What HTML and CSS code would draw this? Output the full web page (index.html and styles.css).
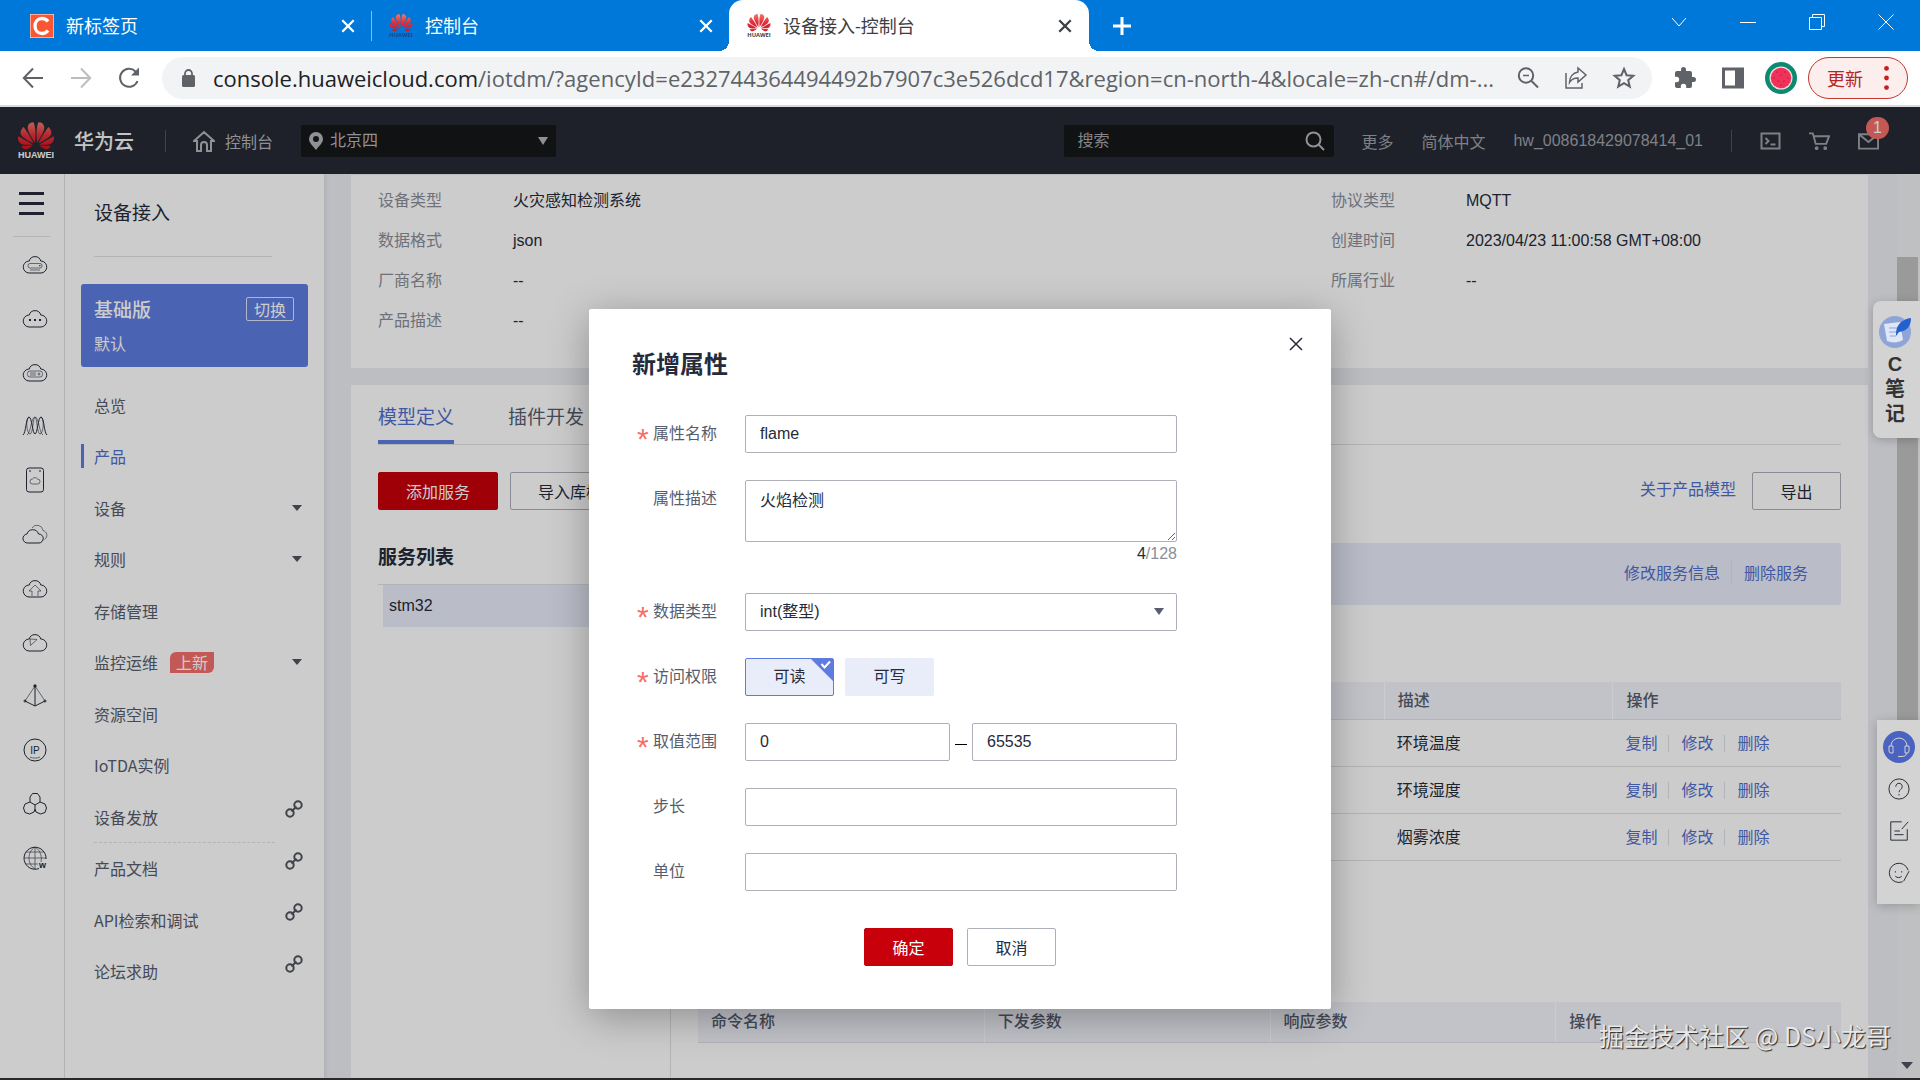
FILE: index.html
```html
<!DOCTYPE html>
<html lang="zh-CN">
<head>
    <meta charset="UTF-8">
    <meta name="viewport" content="width=device-width, initial-scale=1.0">
    <title>设备接入-控制台</title>
    <link rel="stylesheet" href="styles.css">
</head>
<body>
    <svg class="sprite" aria-hidden="true">
        <defs>
            <linearGradient id="petal" x1="0" y1="0" x2="0" y2="1">
                <stop offset="0" stop-color="#f0796a"/>
                <stop offset="0.5" stop-color="#e0303a"/>
                <stop offset="1" stop-color="#d4141e"/>
            </linearGradient>
            <symbol id="huawei" viewBox="0 0 24 25">
                <path fill="url(#petal)" transform="translate(0 -3)" d="M3.67 6.14S1.82 7.91 1.72 9.78v.35c.08 1.51 1.22 2.4 1.22 2.4 1.83 1.79 6.26 4.04 7.3 4.55 0 0 .06.03.1-.01l.02-.04v-.04C7.52 10.8 3.67 6.14 3.67 6.14zM9.65 18.6c-.02-.08-.1-.08-.1-.08l-7.38.26c.8 1.43 2.15 2.53 3.56 2.2.96-.25 3.16-1.78 3.88-2.3.06-.05.04-.09.04-.09zm.08-.78C6.49 15.63.21 12.28.21 12.28c-.15.46-.2.9-.21 1.3v.07c0 1.07.4 1.82.4 1.82.8 1.69 2.34 2.2 2.34 2.2.7.3 1.4.31 1.4.31.12.02 4.4 0 5.54 0 .05 0 .08-.05.08-.05v-.06c0-.03-.03-.05-.03-.05zM9.06 3.19a3.42 3.42 0 0 0-2.57 3.15v.41c.03.6.16 1.05.16 1.05.66 2.9 3.86 7.65 4.55 8.65.05.05.1.03.1.03a.1.1 0 0 0 .06-.1c1.06-10.6-1.11-13.42-1.11-13.42-.32.02-1.19.23-1.19.23zm8.3 2.27s-.49-1.8-2.44-2.28c0 0-.57-.14-1.17-.22 0 0-2.18 2.81-1.12 13.43.01.07.06.08.06.08.07.03.1-.03.1-.03.72-1.03 3.9-5.76 4.55-8.64 0 0 .36-1.4.02-2.34zm-2.92 13.07s-.07 0-.09.05c0 0-.01.07.03.1.7.51 2.85 2 3.88 2.3 0 0 .16.05.43.06h.14c.69-.02 1.9-.37 3-2.26l-7.4-.25zm7.83-8.41c.14-2.06-1.94-3.97-1.94-3.98 0 0-3.85 4.66-6.67 10.8 0 0-.03.08.02.13l.04.01h.06c1.06-.53 5.46-2.77 7.28-4.54 0 0 1.15-.93 1.21-2.42zm1.52 2.14s-6.28 3.37-9.52 5.55c0 0-.05.04-.03.11 0 0 .03.06.07.06 1.16 0 5.56 0 5.67-.02 0 0 .57-.02 1.27-.29 0 0 1.56-.5 2.37-2.27 0 0 .73-1.45.17-3.14z"/>
                <text x="12" y="24" text-anchor="middle" font-size="6" font-weight="bold" fill="currentColor">HUAWEI</text>
            </symbol>
            <symbol id="x" viewBox="0 0 14 14"><path d="M2 2l10 10M12 2L2 12"/></symbol>
            <symbol id="cloud" viewBox="0 0 26 20"><path d="M7 19a6 6 0 0 1-.8-11.900h1A6 6 0 0 1 18.800 7.100h1A6 6 0 0 1 19 19z"/></symbol>
            <symbol id="link" viewBox="0 0 18 18"><circle cx="5" cy="13" r="3.700"/><circle cx="13" cy="5" r="3.700"/><path d="M6.500 11.500l5-5"/></symbol>
        </defs>
    </svg>

    <!-- browser tabs -->
    <div class="tabs">
        <div class="tab first">
            <svg class="favicon" viewBox="0 0 24 24"><rect width="24" height="24" fill="#fc5531"/><path d="M18 7.500C16.500 5.500 14.500 4.500 12 4.500c-4.500 0-7 3.500-7 7.500s2.500 7.500 7 7.500c2.500 0 4.500-1 6-3" fill="none" stroke="#fff" stroke-width="3.400"/></svg>
            <span>新标签页</span>
            <button class="tab-close" aria-label="关闭"><svg viewBox="0 0 14 14"><use href="#x"/></svg></button>
        </div>
        <div class="tab second">
            <svg class="favicon"><use href="#huawei"/></svg>
            <span>控制台</span>
            <button class="tab-close" aria-label="关闭"><svg viewBox="0 0 14 14"><use href="#x"/></svg></button>
        </div>
        <div class="tab active">
            <svg class="favicon"><use href="#huawei"/></svg>
            <span>设备接入-控制台</span>
            <button class="tab-close" aria-label="关闭"><svg viewBox="0 0 14 14"><use href="#x"/></svg></button>
        </div>
        <button class="new-tab" aria-label="新标签页"><svg viewBox="0 0 18 18"><path d="M9 0v18M0 9h18"/></svg></button>
        <div class="window-buttons">
            <button aria-label="标签列表"><svg viewBox="0 0 16 16"><path d="M1 4l7 8 7-8"/></svg></button>
            <button aria-label="最小化"><svg viewBox="0 0 16 16"><path d="M0 8.500h16"/></svg></button>
            <button aria-label="还原"><svg viewBox="0 0 16 16"><path d="M.5 3.500h12v12H.5zM3.500 3.500v-3h12v12h-3"/></svg></button>
            <button aria-label="关闭"><svg viewBox="0 0 16 16"><path d="M.5.5l15 15M15.500.5l-15 15"/></svg></button>
        </div>
    </div>

    <!-- address bar -->
    <div class="toolbar">
        <button class="tool" aria-label="后退"><svg viewBox="0 0 24 24"><path d="M22 12H3M12 2.500L2.800 12l9.200 9.500"/></svg></button>
        <button class="tool disabled" aria-label="前进"><svg viewBox="0 0 24 24"><path d="M2 12h19M12 2.500l9.200 9.500-9.200 9.500"/></svg></button>
        <button class="tool" aria-label="刷新"><svg viewBox="0 0 24 24"><path d="M20.500 15A9 9 0 1 1 18.500 5.500l2 2.500"/><path d="M22 1.500V9.500h-8z" fill="#5f6368" stroke="none"/></svg></button>
        <div class="omnibox">
            <svg class="lock" viewBox="0 0 13 18"><rect y="6" width="13" height="12" rx="1.500" fill="#5f6368"/><path d="M3 7V4.500a3.500 3.500 0 0 1 7 0V7" fill="none" stroke="#5f6368" stroke-width="1.800"/></svg>
            <div class="url"><b>console.huaweicloud.com</b>/iotdm/?agencyId=e232744364494492b7907c3e526dcd17&amp;region=cn-north-4&amp;locale=zh-cn#/dm-...</div>
            <button class="tool" aria-label="缩放"><svg viewBox="0 0 24 24"><circle cx="10" cy="9.500" r="7.200"/><path d="M15.500 15l6.500 6.500"/><path d="M7 9.500h6" stroke-width="1.500"/></svg></button>
            <button class="tool" aria-label="分享"><svg class="thin" viewBox="0 0 24 24"><path d="M2 7v15h16v-5M14 2l8 7-8 7v-4c-4 0-6.500 1-8.500 4.500C5.500 11 9 7 14 6z"/></svg></button>
            <button class="tool" aria-label="收藏"><svg viewBox="0 0 24 24"><path d="M12 3l2.600 6.200 6.700.600-5.100 4.400 1.600 6.500-5.800-3.500-5.800 3.500 1.600-6.500-5.100-4.400 6.700-.6z"/></svg></button>
        </div>
        <button class="tool" aria-label="扩展程序"><svg viewBox="0 0 24 24"><path stroke="none" fill="#5f6368" d="M20.500 11H19V7a2 2 0 0 0-2-2h-4V3.500a2.500 2.500 0 0 0-5 0V5H4a2 2 0 0 0-2 2v3.800h1.500a2.700 2.700 0 0 1 0 5.400H2V20a2 2 0 0 0 2 2h3.800v-1.500a2.700 2.700 0 0 1 5.400 0V22H17a2 2 0 0 0 2-2v-4h1.500a2.500 2.500 0 0 0 0-5z"/></svg></button>
        <button class="tool" aria-label="侧边栏"><svg viewBox="0 0 24 24"><path d="M2.500 3h19v18h-19z" stroke-width="3"/><path d="M14 2h8v20h-8z" fill="#5f6368" stroke="none"/></svg></button>
        <button class="tool" aria-label="用户"><svg class="avatar" viewBox="0 0 32 32"><circle cx="16" cy="16" r="16" fill="#0b8a71"/><circle cx="16" cy="16" r="11.500" fill="#fbe0dc"/><circle cx="16" cy="16" r="10.300" fill="#f0325a"/><g fill="#7d1230"><circle cx="12" cy="10" r=".6"/><circle cx="20" cy="10" r=".6"/><circle cx="16" cy="13" r=".6"/><circle cx="9" cy="16" r=".6"/><circle cx="23" cy="16" r=".6"/><circle cx="13" cy="19" r=".6"/><circle cx="19" cy="19" r=".6"/><circle cx="16" cy="23" r=".6"/></g></svg></button>
        <button class="update">更新<svg viewBox="0 0 4 20"><circle cx="2" cy="2" r="2"/><circle cx="2" cy="10" r="2"/><circle cx="2" cy="18" r="2"/></svg></button>
    </div>

    <div class="page">
        <header>
            <svg class="logo"><use href="#huawei"/></svg>
            <h1>华为云</h1>
            <span class="divider"></span>
            <a class="home" href="#"><svg viewBox="0 0 22 22"><path d="M1 11L11 2l10 9h-3v10h-4v-6a3 3 0 0 0-6 0v6H4V11z"/></svg>控制台</a>
            <div class="region">
                <svg viewBox="0 0 14 18"><path fill-rule="evenodd" d="M7 0a7 7 0 0 1 7 7c0 4-4.500 7.500-7 11C4.500 14.500 0 11 0 7a7 7 0 0 1 7-7zm0 4a3 3 0 1 0 0 6 3 3 0 0 0 0-6z"/></svg>
                <select aria-label="区域"><option>北京四</option></select>
            </div>
            <div class="search">
                <input type="text" placeholder="搜索" aria-label="搜索">
                <svg viewBox="0 0 20 20"><circle cx="8.500" cy="8.500" r="7"/><path d="M13.500 13.500l5.500 5.500"/></svg>
            </div>
            <nav>
                <a href="#">更多</a>
                <a href="#">简体中文</a>
                <a href="#">hw_008618429078414_01</a>
                <span class="divider"></span>
                <a href="#" aria-label="CloudShell"><svg viewBox="0 0 20 20"><path d="M1 2.500h18v15H1zM5 7l3 3-3 3M10 13.500h5"/></svg></a>
                <a href="#" aria-label="购物车"><svg viewBox="0 0 22 20"><path d="M0 2h4l3 11h11l3-8H5"/><circle cx="8" cy="17.500" r="1"/><circle cx="17" cy="17.500" r="1"/></svg></a>
                <a class="mail" href="#" aria-label="消息"><svg viewBox="0 0 22 20"><path d="M1 3h20v15H1zM1 3l10 8 10-8"/></svg><span class="badge">1</span></a>
            </nav>
        </header>

        <div class="body">
            <!-- service rail -->
            <div class="rail">
                <button class="menu" aria-label="服务列表"><span></span><span></span><span></span></button>
                <div class="rail-icons">
                    <svg viewBox="0 0 26 20"><use href="#cloud"/><rect x="6" y="9.500" width="14" height="4.500" rx="2" class="fine"/><path d="M17 11.700h1.500"/><path class="fine" d="M8 16h10"/></svg>
                    <svg viewBox="0 0 26 20"><use href="#cloud"/><path stroke-width="2" d="M7 12h2M12 12h2M17 12h2"/></svg>
                    <svg viewBox="0 0 26 20"><use href="#cloud"/><rect x="5.500" y="9" width="15" height="6" rx="2.500" class="fine"/><path class="fine" d="M8 11h6M8 13h6"/><circle cx="17" cy="12" r="1" class="fine"/></svg>
                    <svg viewBox="0 0 26 20"><path d="M1 19C4 17 4 1 7 1s3.500 17 6 17 3-17 6-17 3 16 6 18"/><path class="fine" d="M5 19C9 17 9 1 13 1s4 16 8 18M7 1C3 4 5 18 8 18s3-17 5-17M19 1c4 3 2 17-1 17S15 1 13 1"/></svg>
                    <svg viewBox="0 0 26 26"><rect x="4.500" y="1" width="17" height="24" rx="2.500"/><path d="M7 4h2M17 4h2"/><path class="fine" d="M10.500 17a2.500 2.500 0 0 1 0-5 3 3 0 0 1 5 0 2.500 2.500 0 0 1 0 5z"/></svg>
                    <svg viewBox="0 0 26 20"><path d="M6 19a4.500 4.500 0 0 1-1-9 6 6 0 0 1 11.500 0A4.500 4.500 0 0 1 17 19z"/><path class="fine" d="M10 4a6 6 0 0 1 11 2.500c4 1 5.500 6 1.500 9"/></svg>
                    <svg viewBox="0 0 26 20"><use href="#cloud"/><path class="fine" d="M10 18v-5H7l6-6 6 6h-3v5"/></svg>
                    <svg viewBox="0 0 26 20"><use href="#cloud"/><path class="fine" d="M8 7l7 .500-6.500 6z"/></svg>
                    <svg viewBox="0 0 26 24"><path class="fine" d="M13 2L3 17M13 2l10 15"/><path d="M3 17l10 5 10-5M13 2v20"/><circle cx="13" cy="2" r="1.200" fill="currentColor"/><circle cx="3" cy="17" r="1"/><circle cx="23" cy="17" r="1"/></svg>
                    <svg viewBox="0 0 26 24"><circle cx="13" cy="12" r="11"/><text x="13" y="15.500" text-anchor="middle" font-size="10" fill="currentColor" stroke="none">IP</text><path class="fine" d="M8 19c3 1.500 7 1.500 10 0"/></svg>
                    <svg viewBox="0 0 26 24"><path d="M8 10V5l2.500-3.500h5L18 5v5M13 13l-5-3-5 2-1.500 4L3 20.500l4.500 1.500 4.500-2 1-3zM13 13l5-3 5 2 1.500 4-1.500 4.500-4.500 1.500-4.500-2-1-3"/></svg>
                    <svg viewBox="0 0 26 24"><path d="M17 22.500A11 11 0 1 1 24 13"/><path class="fine" d="M13 1v22M2 12h22M4 6h18M4 18h12M13 1C5 6 5 18 13 23M13 1c6 4 7 10 6 15"/><text x="17" y="22" font-size="9" font-weight="bold" fill="currentColor" stroke="none">w</text></svg>
                </div>
            </div>

            <aside class="sidebar">
                <h2>设备接入</h2>
                <div class="plan">
                    <strong>基础版</strong><button>切换</button>
                    <span>默认</span>
                </div>
                <ul class="side-menu">
                    <li><a href="#">总览</a></li>
                    <li class="current"><a href="#">产品</a></li>
                    <li class="more"><a href="#">设备</a></li>
                    <li class="more"><a href="#">规则</a></li>
                    <li><a href="#">存储管理</a></li>
                    <li class="more"><a href="#">监控运维</a><span class="new">上新</span></li>
                    <li><a href="#">资源空间</a></li>
                    <li><a href="#">IoTDA实例</a></li>
                    <li class="dashed"><a href="#">设备发放</a><svg><use href="#link"/></svg></li>
                    <li><a href="#">产品文档</a><svg><use href="#link"/></svg></li>
                    <li><a href="#">API检索和调试</a><svg><use href="#link"/></svg></li>
                    <li><a href="#">论坛求助</a><svg><use href="#link"/></svg></li>
                </ul>
            </aside>

            <main>
                <section class="card">
                    <dl class="info">
                        <dt>设备类型</dt><dd>火灾感知检测系统</dd>
                        <dt>协议类型</dt><dd>MQTT</dd>
                        <dt>数据格式</dt><dd>json</dd>
                        <dt>创建时间</dt><dd>2023/04/23 11:00:58 GMT+08:00</dd>
                        <dt>厂商名称</dt><dd>--</dd>
                        <dt>所属行业</dt><dd>--</dd>
                        <dt>产品描述</dt><dd>--</dd>
                    </dl>
                </section>

                <section class="card model">
                    <div class="model-tabs">
                        <a class="current" href="#">模型定义</a>
                        <a href="#">插件开发</a>
                    </div>
                    <div class="actions">
                        <button class="btn primary">添加服务</button>
                        <button class="btn">导入库模型</button>
                        <a href="#">关于产品模型</a>
                        <button class="btn">导出</button>
                    </div>
                    <div class="services">
                        <div class="service-list">
                            <h3>服务列表</h3>
                            <ul><li>stm32</li></ul>
                        </div>
                        <div class="service">
                            <div class="service-bar ops">
                                <a href="#">修改服务信息</a><a href="#">删除服务</a>
                            </div>
                            <table class="properties">
                                <thead>
                                    <tr><th></th><th></th><th></th><th>描述</th><th>操作</th></tr>
                                </thead>
                                <tbody>
                                    <tr><td></td><td></td><td></td><td>环境温度</td><td class="ops"><a href="#">复制</a><a href="#">修改</a><a href="#">删除</a></td></tr>
                                    <tr><td></td><td></td><td></td><td>环境湿度</td><td class="ops"><a href="#">复制</a><a href="#">修改</a><a href="#">删除</a></td></tr>
                                    <tr><td></td><td></td><td></td><td>烟雾浓度</td><td class="ops"><a href="#">复制</a><a href="#">修改</a><a href="#">删除</a></td></tr>
                                </tbody>
                            </table>
                            <table class="commands">
                                <thead>
                                    <tr><th>命令名称</th><th>下发参数</th><th>响应参数</th><th>操作</th></tr>
                                </thead>
                            </table>
                        </div>
                    </div>
                </section>
            </main>
            <div class="scrollbar"><div class="thumb"></div></div>
        </div>

        <div class="overlay">
            <form class="modal">
                <button type="button" class="close" aria-label="关闭"><svg viewBox="0 0 14 14"><path d="M1 1l12 12M13 1L1 13"/></svg></button>
                <h2>新增属性</h2>
                <div class="row required">
                    <label for="name">属性名称</label>
                    <input id="name" type="text" value="flame">
                </div>
                <div class="row">
                    <label for="desc">属性描述</label>
                    <div class="desc">
                        <textarea id="desc">火焰检测</textarea>
                        <p><b>4</b>/128</p>
                    </div>
                </div>
                <div class="row required">
                    <label for="type">数据类型</label>
                    <div class="select"><select id="type"><option>int(整型)</option></select></div>
                </div>
                <div class="row required">
                    <span class="label">访问权限</span>
                    <div class="access">
                        <input id="read" type="checkbox" checked>
                        <label for="read">可读<svg viewBox="0 0 22 22"><path d="M0 0h22v22z" fill="#5e7ce0"/><path d="M10.500 5l3 3.500L19 2.500" fill="none" stroke="#fff" stroke-width="2"/></svg></label>
                        <input id="write" type="checkbox">
                        <label for="write">可写</label>
                    </div>
                </div>
                <div class="row required">
                    <label for="min">取值范围</label>
                    <div class="range">
                        <input id="min" type="text" value="0"><span></span><input type="text" value="65535" aria-label="最大值">
                    </div>
                </div>
                <div class="row">
                    <label for="step">步长</label>
                    <input id="step" type="text">
                </div>
                <div class="row">
                    <label for="unit">单位</label>
                    <input id="unit" type="text">
                </div>
                <div class="buttons">
                    <button type="button" class="btn primary">确定</button>
                    <button type="button" class="btn">取消</button>
                </div>
            </form>
        </div>

        <!-- floating tools on the right edge -->
        <div class="note">
            <svg viewBox="0 0 34 34"><circle cx="17" cy="17" r="16" fill="#8fa5d8"/><path d="M6 9l16-2 3 18c-5 3-11 3-16 1z" fill="#dfe7f6"/><path d="M11 13h8M11 17h8M12 21h6" stroke="#8fa5d8" stroke-width="1.200"/><path d="M18 19C18 10 24 4 33 3c0 8-4 13-12 14l-3 4z" fill="#2261cf"/></svg>
            <span>C</span><span>笔</span><span>记</span>
        </div>
        <div class="float">
            <a class="service-call" href="#" aria-label="客服"><svg viewBox="0 0 22 22"><path d="M3 10a8 8 0 0 1 16 0M1 10h4v7H3a2 2 0 0 1-2-2zM21 10h-4v7h2a2 2 0 0 0 2-2zM19 17c-1 3-3 3.500-6 3.500M10 20.500h4"/></svg></a>
            <a href="#" aria-label="帮助"><svg viewBox="0 0 24 24"><circle cx="12" cy="12" r="11"/><path d="M8.500 9.500c0-5 7-5 7 0 0 3-3.500 3-3.500 6M12 17.500v1.500"/></svg></a>
            <a href="#" aria-label="建议"><svg viewBox="0 0 24 24"><path d="M15 2H3v20h18V10M22 2l-7 8M7 12h6M7 16h10"/></svg></a>
            <a href="#" aria-label="评价"><svg viewBox="0 0 24 24"><path d="M16 21.500A10.500 10.500 0 1 1 22 9M23 10l-6 11M8 10v1.500M15 10v1.500M8 15.500c2 2 5 2 7 0"/></svg></a>
        </div>
        <div class="watermark">掘金技术社区 @ DS小龙哥</div>
    </div>
</body>
</html>
```
FILE: styles.css
```css
* {
    box-sizing: border-box;
}

body {
    margin: 0;
    height: 100vh;
    display: flex;
    flex-direction: column;
    overflow: hidden;
    font-family: "Liberation Sans", "Noto Sans CJK SC", sans-serif;
    font-size: 16px;
    color: #252b3a;
    border-bottom: 2px solid #2a282b;
}

h1, h2, h3, p, ul, dl, dd {
    margin: 0;
    padding: 0;
}

ul {
    list-style: none;
}

a {
    color: #526ecc;
    text-decoration: none;
}

button, input, select, textarea {
    font: inherit;
    color: inherit;
}

button {
    background: none;
    border: none;
    padding: 0;
}

svg {
    display: block;
    fill: none;
    stroke: currentColor;
}

.sprite {
    position: absolute;
    width: 0;
    height: 0;
}

#huawei * {
    stroke: none;
}

/* browser tabs */
.tabs {
    display: flex;
    height: 51px;
    background: #0078d9;
    color: #fff;
    font-size: 18px;
    font-family: "Open Sans", "Noto Sans CJK SC", sans-serif;
}

.tab {
    display: flex;
    align-items: center;
    gap: 12px;
    width: 360px;
    padding: 0 16px 0 18px;
}

.tab.first {
    width: 371px;
    padding: 0 15px 0 30px;
}

.tab.second {
    width: 358px;
    padding-right: 15px;
    color: #20438c;
    background: linear-gradient(#7fc0f2, #7fc0f2) 0 50% / 1px 30px no-repeat;
}

.tab.second span, .tab.second .tab-close {
    color: #fff;
}

.tab.active {
    position: relative;
    background: #fff;
    color: #3c4043;
    border-radius: 14px 14px 0 0;
}

.tab.active::before, .tab.active::after {
    content: "";
    position: absolute;
    bottom: 0;
    width: 10px;
    height: 10px;
}

.tab.active::before {
    left: -10px;
    background: radial-gradient(circle at 0 0, transparent 10px, #fff 10px);
}

.tab.active::after {
    right: -10px;
    background: radial-gradient(circle at 100% 0, transparent 10px, #fff 10px);
}

.tab span {
    padding-bottom: 2px;
}

.favicon {
    width: 24px;
    height: 24px;
}

.tab-close {
    margin-left: auto;
}

.tab-close svg {
    width: 16px;
    height: 16px;
    stroke-width: 2;
}

.new-tab {
    width: 66px;
}

.new-tab svg {
    width: 18px;
    height: 18px;
    margin: 0 auto;
    stroke-width: 3;
}

.window-buttons {
    display: flex;
    height: 44px;
    margin-left: auto;
}

.window-buttons button {
    width: 69px;
}

.window-buttons svg {
    width: 16px;
    height: 16px;
    margin: 0 auto;
}

/* address bar */
.toolbar {
    display: flex;
    align-items: center;
    height: 56px;
    padding: 0 12px 0 9px;
    border-bottom: 2px solid #dadada;
    background: #fff;
    color: #5f6368;
    font-family: "Open Sans", "Noto Sans CJK SC", sans-serif;
}

.tool {
    flex: none;
    width: 48px;
}

.tool svg {
    width: 24px;
    height: 24px;
    margin: 0 auto;
    stroke-width: 2;
}

.tool svg.thin {
    stroke-width: 1.5;
}

.tool svg.avatar {
    width: 32px;
    height: 32px;
    stroke: none;
}

.tool.disabled {
    color: #bbbdbf;
}

.omnibox {
    flex: 1;
    min-width: 0;
    display: flex;
    align-items: center;
    height: 42px;
    margin: 0 9px;
    padding: 0 4px 0 20px;
    border-radius: 21px;
    background: #f1f3f4;
}

.lock {
    width: 13px;
    height: 18px;
    margin-right: 18px;
    stroke: none;
}

.url {
    flex: 1;
    min-width: 0;
    overflow: hidden;
    white-space: nowrap;
    font-size: 22px;
}

.url b {
    font-weight: normal;
    color: #202124;
}

.update {
    display: flex;
    align-items: center;
    justify-content: space-between;
    width: 100px;
    height: 42px;
    margin-left: 3px;
    padding: 0 18px;
    border: 1px solid #c5352c;
    border-radius: 21px;
    background: #fceeed;
    color: #b3261e;
    font-size: 18px;
}

.update svg {
    width: 5px;
    height: 24px;
    fill: #c5221f;
    stroke: none;
}

/* console header */
.page {
    position: relative;
    flex: 1;
    min-height: 0;
    display: flex;
    flex-direction: column;
}

header {
    display: flex;
    align-items: center;
    height: 67px;
    padding: 0 41px 0 18px;
    background: #262a34;
    color: #b4b6bb;
}

.logo {
    width: 36px;
    height: 38px;
    color: #fff;
}

h1 {
    margin-left: 20px;
    font-size: 20px;
    font-weight: 500;
    color: #f5f5f6;
}

.divider {
    width: 1px;
    height: 22px;
    background: #50545e;
}

h1 + .divider {
    margin: 0 27px 0 31px;
}

.home {
    display: flex;
    align-items: center;
    gap: 10px;
    color: inherit;
}

.home svg {
    width: 22px;
    height: 22px;
    stroke-width: 2;
}

.region, .search {
    display: flex;
    align-items: center;
    height: 32px;
    border-radius: 2px;
    background: #16171a;
}

.region {
    position: relative;
    width: 255px;
    margin-left: 28px;
    padding-left: 8px;
}

.region svg {
    width: 14px;
    height: 18px;
    fill: #b4b6bb;
    stroke: none;
}

.region select {
    flex: 1;
    padding: 0 7px;
    border: none;
    appearance: none;
    background: none;
}

.region::after {
    content: "";
    position: absolute;
    right: 8px;
    border: 5px solid transparent;
    border-top: 8px solid #b4b6bb;
    border-bottom: none;
}

.search {
    width: 270px;
    margin-left: auto;
    padding: 0 9px 0 13px;
}

.search input {
    flex: 1;
    min-width: 0;
    padding: 0;
    border: none;
    background: none;
}

.search input::placeholder {
    color: #a4a6ac;
}

.search svg {
    width: 20px;
    height: 20px;
    stroke-width: 2;
}

nav {
    display: flex;
    align-items: center;
    gap: 28px;
    margin-left: 27px;
}

nav a {
    color: #9ea1a8;
}

nav svg {
    width: 21px;
    height: 20px;
    stroke-width: 2;
}

.mail {
    position: relative;
}

.badge {
    position: absolute;
    top: -14px;
    left: 8px;
    width: 23px;
    height: 22px;
    border-radius: 11px;
    background: #f66f6a;
    color: #fff;
    line-height: 22px;
    text-align: center;
}

/* rail and sidebar */
.body {
    position: relative;
    flex: 1;
    min-height: 0;
    display: flex;
    background: #ebeef3;
}

.rail {
    width: 65px;
    background: #fff;
    border-right: 1px solid #dfe1e6;
}

.menu {
    display: flex;
    flex-direction: column;
    gap: 7px;
    width: 37px;
    height: 63px;
    margin-left: 13px;
    padding: 18px 6px 0;
    border-bottom: 1px solid #dfe1e6;
}

.menu span {
    width: 25px;
    height: 3px;
    background: #252b3a;
}

.rail-icons {
    display: flex;
    flex-direction: column;
    padding-left: 6px;
}

.rail-icons svg {
    width: 26px;
    height: 54px;
    margin: 0 auto;
}

.fine {
    stroke-width: 0.6;
}

.sidebar {
    width: 259px;
    padding: 0 16px;
    background: #fff;
    box-shadow: 2px 0 4px rgba(0, 0, 0, 0.08);
    font-family: "Noto Sans CJK SC", sans-serif;
}

.sidebar h2 {
    height: 83px;
    margin: 0 36px 27px 13px;
    padding-top: 24px;
    border-bottom: 1px solid #dfe1e6;
    font-size: 19px;
    line-height: 28px;
    font-weight: normal;
}

.plan {
    display: grid;
    grid-template-columns: 1fr 48px;
    grid-template-rows: 28px 32px;
    align-items: center;
    height: 83px;
    padding: 11px 14px 11px 13px;
    border-radius: 3px;
    background: #5e7ce0;
    color: #fff;
}

.plan strong {
    font-size: 19px;
    line-height: 28px;
    font-weight: 500;
}

.plan span {
    align-self: end;
    line-height: 24px;
}

.plan button {
    height: 24px;
    border: 1px solid #dfe5f9;
    border-radius: 2px;
    line-height: 20px;
}

.side-menu {
    display: grid;
    grid-template-rows: repeat(12, 1fr);
    height: 618px;
    margin-top: 12px;
}

.side-menu li {
    position: relative;
    display: flex;
    align-items: center;
    padding: 0 6px 0 13px;
}

.side-menu a {
    color: #575d6c;
}

.side-menu .current {
    background: linear-gradient(#5e7ce0, #5e7ce0) 0 50% / 3px 24px no-repeat;
}

.side-menu .current a {
    color: #526ecc;
}

.more::after {
    content: "";
    margin-left: auto;
    border: 5px solid transparent;
    border-top: 6px solid #50545e;
    border-bottom: none;
}

.new {
    margin-left: 12px;
    padding: 0 6px;
    border-radius: 6px 0;
    background: #f66f6a;
    color: #fff;
    line-height: 21px;
}

.dashed::before {
    content: "";
    position: absolute;
    left: 13px;
    right: 33px;
    bottom: 0;
    border-bottom: 1px dashed #dfe1e6;
}

.side-menu svg {
    width: 18px;
    height: 18px;
    margin: 0 -1px 15px auto;
    stroke-width: 2;
    color: #50545e;
}

/* content */
main {
    flex: 1;
    min-width: 0;
    display: flex;
    flex-direction: column;
    gap: 17px;
    padding: 1px 29px 0 27px;
}

.card {
    flex: none;
    padding: 6px 27px 27px;
    background: #fff;
}

.info {
    display: grid;
    grid-template-columns: 135px 1fr 135px 375px;
    line-height: 40px;
}

.info dt {
    color: #8a8e99;
}

.card.model {
    flex: 1;
    min-height: 0;
    display: flex;
    flex-direction: column;
    overflow: hidden;
    padding: 0 27px;
}

.model-tabs {
    display: flex;
    gap: 54px;
    height: 60px;
    border-bottom: 1px solid #dfe1e6;
    font-size: 19px;
    line-height: 28px;
}

.model-tabs a {
    height: 59px;
    padding-top: 19px;
    color: #575d6c;
}

.model-tabs .current {
    color: #526ecc;
    border-bottom: 4px solid #5e7ce0;
}

.actions {
    display: flex;
    align-items: center;
    gap: 12px;
    margin-top: 27px;
}

.actions a {
    margin-left: auto;
    margin-right: 4px;
    line-height: 36px;
    padding-bottom: 2px;
}

.btn {
    min-width: 89px;
    height: 38px;
    padding: 0 27px 1px;
    border: 1px solid #adb0b8;
    border-radius: 2px;
}

.btn.primary {
    border-color: #c7000b;
    background: #c7000b;
    color: #fff;
}

.services {
    flex: 1;
    display: flex;
    gap: 27px;
}

.service-list {
    width: 293px;
    padding-top: 34px;
    border-right: 1px solid #dfe1e6;
}

h3 {
    font-size: 19px;
    line-height: 28px;
}

.service-list ul {
    margin-top: 12px;
    padding-left: 5px;
    border-top: 1px solid #dfe1e6;
}

.service-list li {
    padding-left: 6px;
    line-height: 42px;
    background: #e9edfa;
}

.service {
    flex: 1;
    padding-top: 33px;
}

.service-bar {
    display: flex;
    justify-content: flex-end;
    align-items: center;
    height: 62px;
    padding: 0 33px 4px 0;
    border-radius: 2px;
    background: #e9edfa;
}

.ops a + a {
    margin-left: 11px;
    padding-left: 12px;
    border-left: 1px solid #dfe1e6;
}

table {
    width: 100%;
    table-layout: fixed;
    border-collapse: separate;
    border-spacing: 0;
}

th, td {
    padding: 0 0 2px 13px;
    border-bottom: 1px solid #dfe1e6;
    text-align: left;
    white-space: nowrap;
}

th {
    height: 38px;
    padding-bottom: 4px;
    background: #f2f4fc;
    color: #575d6c;
    font-weight: 500;
}

th + th {
    border-left: 1px solid #fff;
}

td {
    height: 47px;
}

.properties {
    margin-top: 77px;
}

.commands {
    margin-top: 141px;
}

.commands th {
    height: 41px;
}

.scrollbar {
    position: relative;
    width: 23px;
    background: #eff0f2;
}

.scrollbar::after {
    content: "";
    position: absolute;
    left: 4px;
    bottom: 9px;
    border: 6px solid transparent;
    border-top: 7px solid #50545e;
    border-bottom: none;
}

.thumb {
    width: 21px;
    height: 546px;
    margin-top: 83px;
    background: #c1c1c1;
}

/* dialog */
.overlay {
    position: absolute;
    inset: 0;
    padding-top: 202px;
    background: rgba(0, 0, 0, 0.2);
}

.modal {
    position: relative;
    display: flex;
    flex-direction: column;
    gap: 27px;
    width: 742px;
    margin: 0 auto;
    padding: 38px 43px 43px;
    border-radius: 2px;
    background: #fff;
    box-shadow: 0 8px 40px rgba(0, 0, 0, 0.3);
}

.modal h2 {
    margin-bottom: 5px;
    font-size: 24px;
    line-height: 36px;
}

.close {
    position: absolute;
    top: 28px;
    right: 28px;
}

.close svg {
    width: 14px;
    height: 14px;
    stroke-width: 1.5;
}

.row {
    display: flex;
    padding-left: 21px;
    width: 545px;
}

.row > label, .label {
    position: relative;
    width: 92px;
    line-height: 38px;
    color: #575d6c;
}

.row > input, .desc, .select, .access, .range {
    flex: 1;
    min-width: 0;
}

.required > label::before, .required > .label::before {
    content: "*";
    position: absolute;
    left: -16px;
    top: 5px;
    font-size: 30px;
    color: #f66f6a;
}

.modal input[type="text"], .modal select, .modal textarea {
    width: 100%;
    height: 38px;
    padding: 0 14px 1px;
    border: 1px solid #adb0b8;
    border-radius: 2px;
    background: #fff;
}

.modal textarea {
    display: block;
    height: 62px;
    padding-top: 8px;
    line-height: 24px;
}

.desc p {
    color: #8a8e99;
    line-height: 24px;
    text-align: right;
}

.desc b {
    font-weight: normal;
    color: #252b3a;
}

.select {
    position: relative;
}

.modal select {
    appearance: none;
}

.select::after {
    content: "";
    position: absolute;
    right: 13px;
    top: 15px;
    border: 5px solid transparent;
    border-top: 7px solid #575d6c;
    border-bottom: none;
}

.access {
    display: flex;
    gap: 11px;
}

.access input {
    position: absolute;
    opacity: 0;
}

.access label {
    position: relative;
    width: 89px;
    border: 1px solid #e9edfa;
    border-radius: 2px;
    background: #e9edfa;
    line-height: 36px;
    text-align: center;
}

.access input:checked + label {
    border-color: #5e7ce0;
}

.access svg {
    position: absolute;
    top: 0;
    right: 0;
    width: 22px;
    height: 22px;
    stroke: none;
}

.range {
    display: flex;
    align-items: center;
    gap: 5px;
}

.range span {
    flex: none;
    width: 12px;
    height: 1px;
    margin-top: 4px;
    background: #000;
}

.buttons {
    display: flex;
    justify-content: center;
    gap: 14px;
    margin-top: 10px;
}

/* right edge */
.note, .float {
    position: absolute;
    right: 0;
    display: flex;
    flex-direction: column;
    align-items: center;
    background: #d3d3d3;
    box-shadow: 0 2px 10px rgba(0, 0, 0, 0.2);
}

.note {
    top: 194px;
    width: 47px;
    height: 137px;
    padding: 14px 3px 0 0;
    border-radius: 8px 0 0 8px;
    font-size: 20px;
    font-weight: bold;
    line-height: 25px;
    color: #333;
}

.note svg {
    width: 34px;
    height: 34px;
    margin-bottom: 3px;
    stroke: none;
}

.float {
    top: 613px;
    width: 43px;
    height: 184px;
    padding-top: 11px;
}

.float a {
    display: flex;
    align-items: center;
    height: 42px;
    color: #1e222e;
}

.float svg {
    width: 22px;
    height: 22px;
    margin: 0 auto;
}

.float .service-call {
    width: 32px;
    height: 32px;
    margin-bottom: 5px;
    border-radius: 16px;
    background: #4b63c0;
    color: #d3d3d3;
}

.watermark {
    position: absolute;
    right: 29px;
    bottom: 25px;
    font-family: "Noto Sans CJK SC", sans-serif;
    font-size: 25px;
    line-height: 36px;
    color: #e8e8e8;
    text-shadow: 1px 1px 1px #222;
}
```
